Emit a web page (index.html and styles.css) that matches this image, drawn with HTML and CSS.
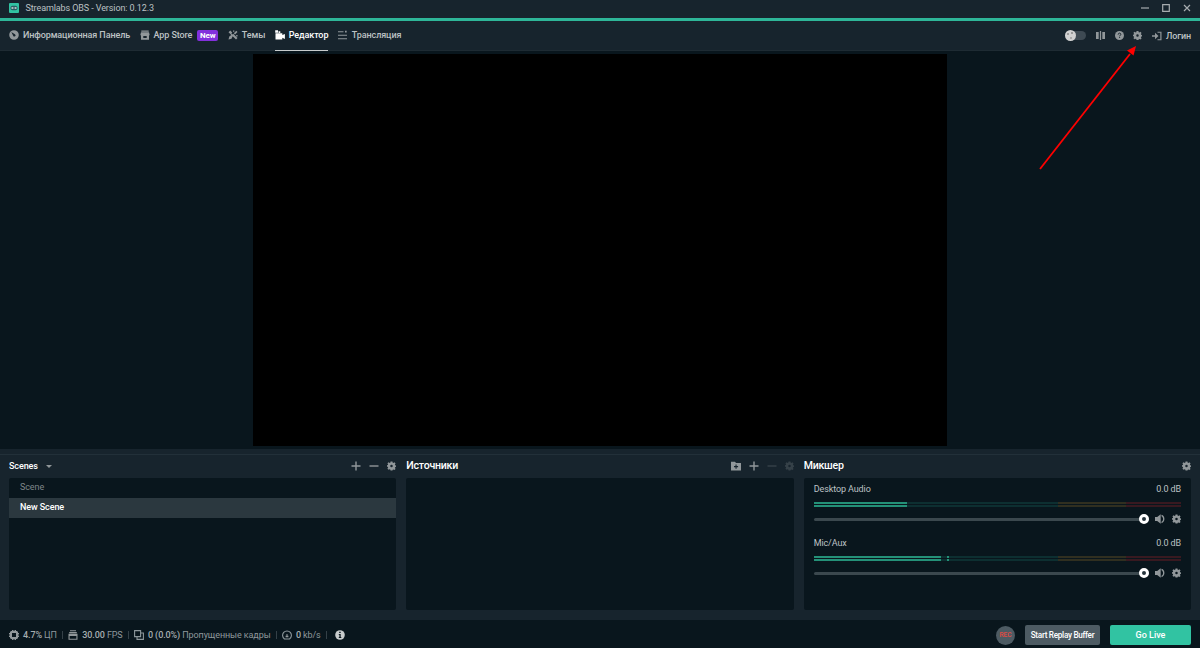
FILE: index.html
```
<!DOCTYPE html>
<html lang="ru">
<head>
    <meta charset="utf-8">
    <title>Streamlabs OBS</title>
    <link rel="stylesheet" href="styles.css">
</head>
<body>

<svg class="sprite">
    <symbol id="gear" viewBox="0 0 16 16">
        <path fill-rule="evenodd" d="M6.300 0h3.400l.5 2.100 1 .5 2-1.100 2 2-1.200 2 .5 1 1.500.4v2.600l-1.500.5-.5 1.300 1.200 2-2 2-2-1.200-1 .5L9.700 16H6.300l-.5-1.900-1-.5-2 1.200-2-2 1.200-2-.5-1.300L0 9.400V6.700l1.500-.4.5-1-1.200-2 2-2 2 1.200 1-.5zM8 5.800a2.200 2.200 0 1 0 0 4.400 2.200 2.200 0 0 0 0-4.400z"/>
    </symbol>
    <symbol id="plus" viewBox="0 0 10 10"><path d="M4.300 .5h1.400v3.800h3.800v1.400H5.700v3.800H4.300V5.700H.5V4.300h3.800z"/></symbol>
    <symbol id="minus" viewBox="0 0 10 10"><path d="M.5 4.300h9v1.400h-9z"/></symbol>
    <symbol id="speaker" viewBox="0 0 10 10"><path d="M0 3h2.200L5.700 .3v9.400L2.200 7H0zM6.500 .8c3.900 1 3.900 7.400 0 8.400V7.800c2.100-1 2.100-4.600 0-5.600z"/></symbol>
</svg>

<div class="app">
    <header class="title-bar">
        <svg class="logo" viewBox="0 0 10 10">
            <rect width="10" height="10" rx="1" fill="#31c3a2"/>
            <rect x="1.500" y="2.800" width="7" height="4.400" rx="2" fill="#2b5f63"/>
            <path d="M2.600 4.200h1.200v1.600H2.600zM4.500 4.400h1v1.200h-1zM6.200 4.200h1.200v1.600H6.200z" fill="#fff"/>
        </svg>
        <span class="title">Streamlabs OBS - Version: 0.12.3</span>
        <div class="window-controls">
            <svg viewBox="0 0 8 8"><path d="M0 4h8"/></svg>
            <svg viewBox="0 0 8 8"><path d="M.7 .7h6.600v6.600H.7z"/></svg>
            <svg viewBox="0 0 8 8"><path d="M1 1l6 6M7 1L1 7"/></svg>
        </div>
    </header>

    <nav class="top-nav">
        <a class="tab">
            <svg viewBox="0 0 10 10"><path fill-rule="evenodd" d="M5 .2a4.800 4.800 0 1 0 0 9.600A4.800 4.800 0 0 0 5 .2zM2.300 2l3.600 2.200a1.200 1.200 0 1 1-1.700 1.500z"/></svg>
            <span>Информационная Панель</span>
        </a>
        <a class="tab">
            <svg viewBox="0 0 10 10"><path fill-rule="evenodd" d="M1.300 .6h7.400v1.200H1.300zM1 2.300h8l.7 3H9v4.400H1V5.300H.3zM3.300 6v2h3.400V6z"/></svg>
            <span>App Store</span>
            <b class="badge">New</b>
        </a>
        <a class="tab">
            <svg viewBox="0 0 10 10"><path d="M.5 2.300L2.300 .5 4.200 2.400l-.8 1 1 1 .8-.6L9.500 8 8 9.500 4.700 6.200 3.500 8.700.5 9.500l.8-3 2-1.500zM5.800 3.300L8.300 .8l1.200 1.200L7 4.500zM5 .5h1.300v1.300H5zM8.200 5.100h1.300v1.300H8.200z"/></svg>
            <span>Темы</span>
        </a>
        <a class="tab active">
            <svg viewBox="0 0 10 10"><path d="M.2 .3H3v2.500H.2zM3.500 1.200h1.800v1.800H3.500zM.5 3.300h6.800v1.800L9.900 4v5L7.300 7.800v1.700H.5z"/></svg>
            <span>Редактор</span>
        </a>
        <a class="tab">
            <svg viewBox="0 0 10 10"><path d="M0 1.300h5.500v1H0zM0 4.700h9v1H0zM0 8.300h9v1H0zM7 .8h1.700v1.700H7z"/></svg>
            <span>Трансляция</span>
        </a>
        <div class="nav-right">
            <div class="theme-toggle"><i></i></div>
            <svg class="icon" viewBox="0 0 10 10"><path d="M0 1h3v8H0zM4.300 0h1.400v10H4.300zM7 1h3v8H7z"/></svg>
            <svg class="icon" viewBox="0 0 10 10"><circle cx="5" cy="5" r="5"/><path d="M3.500 4c0-2.200 3-2 3-.3 0 1-1.400 1-1.400 2.200M5.100 6.800v1" fill="none" stroke="#17242d" stroke-width="1.100"/></svg>
            <svg class="icon"><use href="#gear"/></svg>
            <a class="login">
                <svg viewBox="0 0 10 10"><path d="M0 4.300h3V1.800L6.500 5 3 8.200V5.700H0zM5.500 .7h4v8.600h-4V8.200h2.800V1.800H5.500z"/></svg>
                <span>Логин</span>
            </a>
        </div>
    </nav>

    <main class="preview">
        <div class="canvas"></div>
    </main>

    <section class="studio">
        <div class="panel">
            <div class="panel-head">
                <h2 class="scenes-title">Scenes</h2>
                <i class="caret"></i>
                <div class="tools">
                    <svg><use href="#plus"/></svg>
                    <svg><use href="#minus"/></svg>
                    <svg><use href="#gear"/></svg>
                </div>
            </div>
            <ul class="panel-body">
                <li class="scene">Scene</li>
                <li class="scene selected">New Scene</li>
            </ul>
        </div>

        <div class="panel">
            <div class="panel-head">
                <h2>Источники</h2>
                <div class="tools">
                    <svg viewBox="0 0 10 10"><path fill-rule="evenodd" d="M0 .7h4l1 1.200h5v7.700H0zM4.500 3.600v1.500H3v1.100h1.500v1.500h1.100V6.200h1.500V5.100H5.600V3.600z"/></svg>
                    <svg><use href="#plus"/></svg>
                    <svg class="disabled"><use href="#minus"/></svg>
                    <svg class="disabled"><use href="#gear"/></svg>
                </div>
            </div>
            <div class="panel-body"></div>
        </div>

        <div class="panel">
            <div class="panel-head">
                <h2>Микшер</h2>
                <div class="tools"><svg><use href="#gear"/></svg></div>
            </div>
            <div class="panel-body mixer">
                <div class="channel">
                    <div class="channel-head"><span>Desktop Audio</span><span>0.0 dB</span></div>
                    <div class="meter"><i style="width: 93.5px"></i></div>
                    <div class="meter"><i style="width: 93.5px"></i></div>
                    <div class="controls">
                        <div class="slider"><i></i></div>
                        <svg><use href="#speaker"/></svg>
                        <svg><use href="#gear"/></svg>
                    </div>
                </div>
                <div class="channel">
                    <div class="channel-head"><span>Mic/Aux</span><span>0.0 dB</span></div>
                    <div class="meter"><i style="width: 127px"></i><b></b></div>
                    <div class="meter"><i style="width: 127px"></i><b></b></div>
                    <div class="controls">
                        <div class="slider"><i></i></div>
                        <svg><use href="#speaker"/></svg>
                        <svg><use href="#gear"/></svg>
                    </div>
                </div>
            </div>
        </div>
    </section>

    <footer class="status-bar">
        <div class="stat">
            <svg viewBox="0 0 10 10"><path fill-rule="evenodd" d="M2 1h1V0h1v1h.5V0h1v1H6V0h1v1h1l1 1v1h1v1H9v.5h1v1H9V6h1v1H9v1L8 9H7v1H6V9h-.5v1h-1V9H4v1H3V9H2L1 8V7H0V6h1v-.5H0v-1h1V4H0V3h1V2zM3 3v4h4V3z"/></svg>
            <span><b>4.7%</b> ЦП</span>
        </div>
        <div class="stat">
            <svg viewBox="0 0 10 10"><path fill-rule="evenodd" d="M2 .2h6v1H2zM1.200 1.900h7.600v1.300H1.200zM.5 3.800h9v6h-9zM1.600 6v2.700h6.800V6z"/></svg>
            <span><b>30.00</b> FPS</span>
        </div>
        <div class="stat">
            <svg viewBox="0 0 10 10"><path d="M.6 .6h6v6h-6zM3 7v2.400h6.400V3H7" fill="none" stroke="#8d979b" stroke-width="1.100"/></svg>
            <span><b>0 (0.0%)</b> Пропущенные кадры</span>
        </div>
        <div class="stat">
            <svg viewBox="0 0 10 10"><path d="M2.500 9A4.400 4.400 0 1 1 7.500 9z" fill="none" stroke="#8d979b" stroke-width="1.100"/><path d="M4.500 4h1v1.800h.9v1.400H3.600V5.800h.9z"/></svg>
            <span><b>0</b> kb/s</span>
        </div>
        <svg class="info" viewBox="0 0 10 10"><circle cx="5" cy="5" r="4.800"/><path d="M4.200 1.800h1.500v1.300H4.200zM3.800 4h1.900v3h.6v1H3.800V7h.6V5h-.6z" fill="#09161d"/></svg>
        <div class="actions">
            <button class="rec">REC</button>
            <button class="replay">Start Replay Buffer</button>
            <button class="go-live">Go Live</button>
        </div>
    </footer>

    <!-- pointer to the settings button -->
    <svg class="arrow" viewBox="0 0 100 128">
        <path d="M4 126L94 11" stroke="#ff0000" stroke-width="1.800"/>
        <path d="M100 3L97.500 12.500 91 7.500z" fill="#ff0000"/>
    </svg>
</div>

</body>
</html>
```
FILE: styles.css
```
body, html {
    margin: 0;
    padding: 0;
    font-family: Roboto, sans-serif;
    font-size: 9px;
    letter-spacing: -0.1px;
    color: #bdc2c4;
    background-color: #09161d;
}

* {
    box-sizing: border-box;
}

svg {
    display: block;
    flex: none;
    width: 10px;
    height: 10px;
    fill: #91979a;
}

.sprite {
    display: none;
}

.app {
    position: relative;
    display: flex;
    flex-direction: column;
    width: 1200px;
    height: 648px;
    overflow: hidden;
    white-space: nowrap;
}

/* title bar */

.title-bar {
    display: flex;
    align-items: center;
    height: 21px;
    padding: 0 9px 2px;
    background-color: #17242d;
    border-bottom: 3px solid #2eb698;
}

.title {
    margin-left: 6.5px;
}

.window-controls {
    display: flex;
    gap: 13px;
    margin-left: auto;
}

.window-controls svg {
    width: 8px;
    height: 8px;
    fill: none;
    stroke: #a6acaf;
    stroke-width: 1.2;
}

/* navigation */

.top-nav {
    display: flex;
    height: 30px;
    padding: 0 9px;
    background-color: #17242d;
    border-bottom: 1px solid #1e2b33;
    font-weight: 500;
}

.tab {
    display: flex;
    align-items: center;
    height: 30px;
    padding-bottom: 2px;
    margin-right: 9.5px;
}

.tab svg {
    margin-right: 4px;
}

.tab.active {
    color: #fff;
    border-bottom: 1px solid #c8cccd;
    padding-bottom: 1px;
}

.tab.active svg {
    fill: #fff;
}

.badge {
    margin-left: 5px;
    width: 21px;
    height: 11px;
    line-height: 11px;
    border-radius: 2px;
    background-color: #8230dc;
    color: #fff;
    font-size: 8px;
    text-align: center;
}

.nav-right {
    display: flex;
    align-items: center;
    margin-left: auto;
}

.theme-toggle {
    width: 20px;
    height: 9px;
    margin-right: 10px;
    border-radius: 5px;
    background-color: #3e4a53;
}

.theme-toggle i {
    display: block;
    width: 11px;
    height: 11px;
    margin: -1px 0 0 -1px;
    border-radius: 50%;
    background: radial-gradient(circle at 3px 4px, #999 1px, transparent 1.5px),
        radial-gradient(circle at 7px 3px, #999 1px, transparent 1.5px),
        radial-gradient(circle at 6px 8px, #aaa 1px, transparent 1.5px), #d1d1d1;
}

.nav-right .icon {
    margin-right: 9.6px;
    width: 9px;
    height: 9px;
}

.login {
    display: flex;
    align-items: center;
}

.login svg {
    margin-right: 4px;
}

/* preview */

.preview {
    height: 398px;
    padding: 3px 253px;
}

.canvas {
    width: 694px;
    height: 392px;
    background-color: #000;
}

/* scenes, sources and mixer */

.studio {
    display: flex;
    gap: 10px;
    height: 171px;
    padding: 5px 9px 0;
    background: linear-gradient(#223039, #223039) 0 5px / 100% 1px no-repeat #17242d;
}

.panel {
    flex: 1;
}

.panel-head {
    display: flex;
    align-items: center;
    height: 23.5px;
}

h2 {
    margin: 0;
    color: #fff;
    font-size: 10.6px;
    font-weight: 500;
    letter-spacing: -0.25px;
}

.scenes-title {
    font-size: 9px;
    letter-spacing: -0.1px;
}

.caret {
    margin: 2px 0 0 8px;
    border: 3px solid transparent;
    border-top: 3px solid #91979a;
    border-bottom: 0;
}

.tools {
    display: flex;
    gap: 8px;
    margin-left: auto;
}

.tools svg:last-child {
    width: 9px;
}

.disabled {
    opacity: 0.25;
}

.panel-body {
    height: 132.5px;
    margin: 0;
    padding: 0;
    border-radius: 2px;
    background-color: #09161d;
    list-style: none;
}

.scene {
    height: 20px;
    padding-left: 11px;
    line-height: 19px;
    color: #7e868a;
}

.scene.selected {
    background-color: #2b383f;
    color: #fff;
    font-weight: 500;
}

.mixer {
    padding: 6px 10px;
}

.channel {
    height: 54px;
}

.channel-head {
    display: flex;
    justify-content: space-between;
    height: 18.5px;
    line-height: 11px;
}

.meter {
    position: relative;
    height: 2px;
    margin-bottom: 1px;
    background: linear-gradient(to right, #0d2f31 66.5%, #302f20 66.5%, #302f20 85%, #381920 85%);
}

.meter i {
    display: block;
    height: 2px;
    background-color: #249178;
}

.meter b {
    position: absolute;
    top: 0;
    left: 133px;
    width: 2px;
    height: 2px;
    background-color: #249178;
}

.controls {
    display: flex;
    align-items: center;
    height: 10px;
    margin-top: 7px;
}

.slider {
    display: flex;
    align-items: center;
    justify-content: flex-end;
    width: 335px;
    height: 3px;
    margin-right: 6px;
    border-radius: 2px;
    background-color: #3b484e;
}

.slider i {
    width: 10px;
    height: 10px;
    border: 3.5px solid #fff;
    border-radius: 50%;
    background-color: #26343c;
}

.controls svg + svg {
    width: 9px;
    margin-left: auto;
}

/* status bar */

.status-bar {
    display: flex;
    align-items: center;
    height: 28px;
    padding: 2px 9px 0;
    background-color: #09161d;
    color: #8f989c;
}

.stat {
    display: flex;
    align-items: center;
}

.stat svg {
    margin-right: 4px;
}

.stat b {
    color: #a5adb0;
    font-weight: 500;
}

.stat::after {
    content: "";
    width: 1px;
    height: 8px;
    margin: 0 5.2px;
    background-color: #344047;
}

.status-bar .info {
    margin-left: 3px;
    fill: #c8cccd;
}

.actions {
    display: flex;
    align-items: center;
    gap: 10px;
    margin-left: auto;
}

button {
    height: 20px;
    padding: 0;
    border: 0;
    border-radius: 2px;
    background-color: #4d5b63;
    color: #fff;
    font-family: Roboto, sans-serif;
    font-size: 9px;
    font-weight: 500;
}

.rec {
    width: 19px;
    height: 19px;
    border-radius: 50%;
    color: #e34b42;
    font-size: 6.6px;
}

.replay {
    width: 75px;
    font-size: 8.2px;
    letter-spacing: -0.3px;
}

.go-live {
    width: 81px;
    background-color: #31c3a2;
}

.arrow {
    position: absolute;
    left: 1036px;
    top: 43px;
    width: 100px;
    height: 128px;
}
```
